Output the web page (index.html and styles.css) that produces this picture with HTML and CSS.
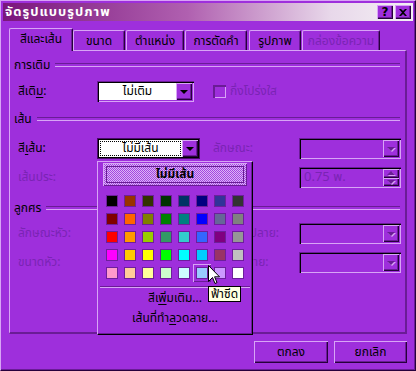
FILE: index.html
```html
<!DOCTYPE html>
<html lang="th">
<head>
<meta charset="utf-8">
<title>จัดรูปแบบรูปภาพ</title>
<link rel="stylesheet" href="styles.css">
</head>
<body>
<div class="window">
  <div class="titlebar">
    <span class="title">จัดรูปแบบรูปภาพ</span>
    <span class="tb-btns">
      <span class="tb-btn help">?</span>
      <span class="tb-btn close"><svg width="8" height="7" viewBox="0 0 8 7"><path d="M0 0h2l2 2 2-2h2L5 3.5 8 7H6L4 5 2 7H0l3-3.5z" fill="#000"/></svg></span>
    </span>
  </div>

  <div class="tabs">
    <div class="tab active t1">สีและเส้น</div>
    <div class="tab t2">ขนาด</div>
    <div class="tab t3">ตำแหน่ง</div>
    <div class="tab t4">การตัดคำ</div>
    <div class="tab t5">รูปภาพ</div>
    <div class="tab t6 disabled">กล่องข้อความ</div>
  </div>

  <div class="panel">
    <div class="group-head g1"><span>การเติม</span></div>
    <div class="row r1">
      <span class="lbl">สีเติ<u>ม</u>:</span>
      <div class="combo fill"><span class="field">ไม่เติม</span><span class="ddbtn"><i class="arrow"></i></span></div>
      <span class="checkwrap"><span class="check"></span><span class="dis">กึ่งโปร่งใส</span></span>
    </div>

    <div class="group-head g2"><span>เส้น</span></div>
    <div class="row r2">
      <span class="lbl">สี<u>เ</u>ส้น:</span>
      <div class="combo focus"><span class="field"><span class="focusbox">ไม่มีเส้น</span></span><span class="ddbtn"><i class="arrow"></i></span></div>
      <span class="rlbl dis">ลักษณะ:</span>
      <div class="combo disabled"><span class="field"></span><span class="ddbtn"><i class="arrow off"></i></span></div>
    </div>
    <div class="row r3">
      <span class="lbl dis">เส้นประ:</span>
      <div class="combo disabled"><span class="field"></span><span class="ddbtn"><i class="arrow off"></i></span></div>
      <span class="rlbl dis">น้ำหนัก:</span>
      <div class="combo disabled spin"><span class="field dis">0.75 พ.</span><span class="spinbtns"><span class="sbtn"><i class="arrow up off"></i></span><span class="sbtn"><i class="arrow off"></i></span></span></div>
    </div>

    <div class="group-head g3"><span>ลูกศร</span></div>
    <div class="row r4">
      <span class="lbl dis">ลักษณะหัว:</span>
      <div class="combo disabled"><span class="field"></span><span class="ddbtn"><i class="arrow off"></i></span></div>
      <span class="rlbl dis">ลักษณะปลาย:</span>
      <div class="combo disabled"><span class="field"></span><span class="ddbtn"><i class="arrow off"></i></span></div>
    </div>
    <div class="row r5">
      <span class="lbl dis">ขนาดหัว:</span>
      <div class="combo disabled"><span class="field"></span><span class="ddbtn"><i class="arrow off"></i></span></div>
      <span class="rlbl dis">ขนาดปลาย:</span>
      <div class="combo disabled"><span class="field"></span><span class="ddbtn"><i class="arrow off"></i></span></div>
    </div>
  </div>

  <div class="buttons">
    <span class="btn ok">ตกลง</span>
    <span class="btn cancel">ยกเลิก</span>
  </div>

  <div class="popup">
    <div class="nonebtn"><span>ไม่มีเส้น</span></div>
    <div class="grid">
      <span class="cell"><i style="background:#000000"></i></span>
      <span class="cell"><i style="background:#993300"></i></span>
      <span class="cell"><i style="background:#333300"></i></span>
      <span class="cell"><i style="background:#003300"></i></span>
      <span class="cell"><i style="background:#003366"></i></span>
      <span class="cell"><i style="background:#000080"></i></span>
      <span class="cell"><i style="background:#333399"></i></span>
      <span class="cell"><i style="background:#333333"></i></span>

      <span class="cell"><i style="background:#800000"></i></span>
      <span class="cell"><i style="background:#ff6600"></i></span>
      <span class="cell"><i style="background:#808000"></i></span>
      <span class="cell"><i style="background:#008000"></i></span>
      <span class="cell"><i style="background:#008080"></i></span>
      <span class="cell"><i style="background:#0000ff"></i></span>
      <span class="cell"><i style="background:#666699"></i></span>
      <span class="cell"><i style="background:#808080"></i></span>

      <span class="cell"><i style="background:#ff0000"></i></span>
      <span class="cell"><i style="background:#ff9900"></i></span>
      <span class="cell"><i style="background:#99cc00"></i></span>
      <span class="cell"><i style="background:#339966"></i></span>
      <span class="cell"><i style="background:#33cccc"></i></span>
      <span class="cell"><i style="background:#3366ff"></i></span>
      <span class="cell"><i style="background:#800080"></i></span>
      <span class="cell"><i style="background:#969696"></i></span>

      <span class="cell"><i style="background:#ff00ff"></i></span>
      <span class="cell"><i style="background:#ffcc00"></i></span>
      <span class="cell"><i style="background:#ffff00"></i></span>
      <span class="cell"><i style="background:#00ff00"></i></span>
      <span class="cell"><i style="background:#00ffff"></i></span>
      <span class="cell"><i style="background:#00ccff"></i></span>
      <span class="cell"><i style="background:#993366"></i></span>
      <span class="cell"><i style="background:#c0c0c0"></i></span>

      <span class="cell"><i style="background:#ff99cc"></i></span>
      <span class="cell"><i style="background:#ffcc99"></i></span>
      <span class="cell"><i style="background:#ffff99"></i></span>
      <span class="cell"><i style="background:#ccffcc"></i></span>
      <span class="cell"><i style="background:#ccffff"></i></span>
      <span class="cell hot"><i style="background:#99ccff"></i></span>
      <span class="cell"><i style="background:#cc99ff"></i></span>
      <span class="cell"><i style="background:#ffffff"></i></span>
    </div>
    <div class="sep"></div>
    <div class="item">สีเ<u>พ</u>ิ่มเติม...</div>
    <div class="item">เส้นที่ทำ<u>ล</u>วดลาย...</div>
  </div>

  <div class="tooltip">ฟ้าซีด</div>

  <svg class="cursor" width="12" height="20" viewBox="0 0 12 20">
    <path d="M0.5 0.5V16.5L4.5 12.5L7 18.5L9 17.6L6.6 11.8H11.5Z" fill="#fff" stroke="#000" stroke-width="1" stroke-linejoin="miter"/>
  </svg>
</div>
</body>
</html>
```

FILE: styles.css
```css
:root {
  --face: #9e2fdc;
  --hi: #d8a4f6;
  --lo: #6a1c96;
  --dk: #26003c;
  --dis: #7a24b4;
}

* { box-sizing: border-box; }

html, body {
  margin: 0;
  padding: 0;
}

body {
  width: 416px;
  height: 371px;
  overflow: hidden;
  background: var(--face);
  font-family: Tahoma, "Noto Sans Thai", "Noto Sans", "DejaVu Sans", sans-serif;
  font-size: 12px;
  color: #000;
}

u { text-decoration: underline; text-underline-offset: 2px; }

.window {
  position: relative;
  width: 416px;
  height: 371px;
  background: var(--face);
  border: 1px solid;
  border-color: var(--hi) var(--dk) var(--dk) var(--hi);
  box-shadow: inset -1px -1px var(--lo);
  padding: 2px;
  display: flex;
  flex-direction: column;
}

/* title bar */
.titlebar {
  height: 18px;
  display: flex;
  align-items: center;
  justify-content: space-between;
  background: linear-gradient(90deg, #7a167c 0%, #b060b0 45%, #e8d8ea 80%, #f4f0f4 100%);
  padding: 0 2px 0 2px;
}
.title {
  color: #fff;
  font-weight: bold;
  font-size: 13px;
  letter-spacing: 1px;
  line-height: 18px;
}
.tb-btns { display: flex; gap: 2px; }
.tb-btn {
  width: 16px;
  height: 14px;
  background: var(--face);
  box-shadow: inset 1px 1px var(--hi), inset -1px -1px var(--dk), inset -2px -2px var(--lo);
  display: flex;
  align-items: center;
  justify-content: center;
  font-weight: bold;
  font-size: 12px;
  line-height: 14px;
  font-family: "DejaVu Sans", sans-serif;
}
.tb-btn.help { padding-bottom: 1px; }

/* tabs */
.tabs {
  margin: 7px 0 0 6px;
  height: 22px;
  display: flex;
  align-items: flex-end;
}
.tab {
  height: 20px;
  border: 1px solid var(--hi);
  border-bottom: none;
  border-right: 1px solid var(--dk);
  box-shadow: inset -1px 0 var(--lo);
  border-radius: 2px 2px 0 0;
  display: flex;
  align-items: center;
  justify-content: center;
  line-height: 18px;
  padding-top: 1px;
}
.tab.active {
  height: 23px;
  margin-bottom: -1px;
  position: relative;
  z-index: 2;
  background: var(--face);
  padding-top: 0;
  padding-bottom: 2px;
}
.t1 { width: 64px; }
.t2 { width: 52px; }
.t3 { width: 58px; margin-left: 1px; }
.t4 { width: 62px; margin-left: 1px; }
.t5 { width: 52px; margin-left: 2px; }
.t6 { width: 78px; margin-left: 1px; }
.tab.disabled { color: var(--dis); }

/* panel */
.panel {
  margin-left: 6px;
  width: 398px;
  height: 284px;
  border-top: 1px solid var(--hi);
  border-left: 1px solid var(--hi);
  border-right: 2px solid var(--lo);
  border-bottom: 2px solid var(--lo);
  padding: 0 4px 0 4px;
  position: relative;
  z-index: 1;
}

.group-head {
  height: 15px;
  display: flex;
  align-items: center;
  margin-right: 1px;
  line-height: 15px;
}
.group-head::after {
  content: "";
  flex: 1;
  height: 2px;
  border-top: 1px solid var(--lo);
  border-bottom: 1px solid var(--hi);
  margin-left: 5px;
  margin-top: -2px;
}
.g1 { margin-top: 7px; }
.g2 { margin-top: 10px; }
.g3 { margin-top: 13px; }

.row {
  height: 21px;
  padding-left: 4px;
  display: grid;
  grid-template-columns: 79px 103px 13px 1fr 102px;
  align-items: center;
  line-height: 21px;
}
.row .lbl { grid-column: 1; }
.row .combo { grid-column: 2; }
.row .rlbl { grid-column: 4; }
.row .rlbl + .combo { grid-column: 5; }
.r1 { margin-top: 8px; }
.r2 { margin-top: 11px; }
.r3 { margin-top: 8px; }
.r4 { margin-top: 7px; }
.r5 { margin-top: 8px; }

.dis { color: var(--dis); }

/* combos */
.combo {
  height: 21px;
  display: flex;
  background: #fff;
  padding: 2px 2px 2px 2px;
  box-shadow: inset 1px 1px var(--lo), inset 2px 2px #000, inset -1px -1px var(--hi), inset -2px -2px var(--face);
}
.combo.fill { width: 97px; }
.combo.disabled { background: var(--face); }
.combo.focus {
  box-shadow: inset 0 0 0 1px #4a0a6a, inset 0 0 0 2px #000;
}
.field {
  flex: 1;
  text-align: center;
  line-height: 17px;
  white-space: nowrap;
  overflow: hidden;
}
.combo.focus .field {
  padding: 1px 1px;
  display: flex;
}
.focusbox {
  flex: 1;
  outline: 1px dotted #000;
  outline-offset: -1px;
  line-height: 15px;
  text-align: center;
}
.ddbtn {
  width: 16px;
  height: 17px;
  background: var(--face);
  box-shadow: inset 1px 1px var(--hi), inset -1px -1px var(--dk), inset -2px -2px var(--lo);
  display: flex;
  align-items: center;
  justify-content: center;
}
.arrow {
  display: block;
  width: 0;
  height: 0;
  border-left: 4px solid transparent;
  border-right: 4px solid transparent;
  border-top: 4px solid #000;
  margin-top: 1px;
}
.arrow.off {
  border-top-color: var(--lo);
  filter: drop-shadow(1px 1px 0 var(--hi));
}
.arrow.up {
  border-top: none;
  border-bottom: 4px solid var(--lo);
  margin-top: 0;
}

.combo.spin .field {
  text-align: left;
  padding-left: 3px;
  font-size: 13px;
  line-height: 17px;
  overflow: visible;
}
.spinbtns {
  width: 16px;
  display: flex;
  flex-direction: column;
}
.sbtn {
  flex: 1;
  background: var(--face);
  box-shadow: inset 1px 1px var(--hi), inset -1px -1px var(--dk), inset -2px -2px var(--lo);
  display: flex;
  align-items: center;
  justify-content: center;
}

/* checkbox */
.checkwrap {
  grid-column: 4 / 6;
  display: flex;
  align-items: center;
  gap: 4px;
}
.check {
  width: 13px;
  height: 13px;
  box-shadow: inset 1px 1px var(--lo), inset 2px 2px var(--lo), inset -1px -1px var(--hi);
}

/* dialog buttons */
.buttons {
  margin-top: 7px;
  display: flex;
  justify-content: flex-end;
  gap: 6px;
  padding-right: 6px;
}
.btn {
  height: 22px;
  display: flex;
  align-items: center;
  justify-content: center;
  background: var(--face);
  box-shadow: inset 1px 1px var(--hi), inset -1px -1px var(--dk), inset -2px -2px var(--lo);
}
.btn.ok { width: 74px; }
.btn.cancel { width: 73px; }

/* popup palette */
.popup {
  position: absolute;
  left: 96px;
  top: 160px;
  width: 156px;
  height: 174px;
  z-index: 5;
  background: var(--face);
  border: 1px solid;
  border-color: var(--hi) #000 #000 var(--hi);
  box-shadow: inset -1px -1px var(--lo);
  padding: 1px 5px;
}
.nonebtn {
  height: 23px;
  padding: 3px;
  background: repeating-conic-gradient(#dcb6f6 0 25%, #a246e0 0 50%) 0 0 / 2px 2px;
  box-shadow: inset 1px 1px var(--hi), inset -1px -1px var(--lo);
}
.nonebtn span {
  display: block;
  height: 17px;
  border: 1px solid var(--lo);
  text-align: center;
  line-height: 15px;
  font-weight: bold;
}
.grid {
  margin-top: 6px;
  display: grid;
  grid-template-columns: repeat(8, 18px);
  grid-auto-rows: 18px;
}
.cell {
  display: flex;
  align-items: center;
  justify-content: center;
}
.cell i {
  display: block;
  width: 12px;
  height: 12px;
  border: 1px solid #6d1f9c;
}
.cell.hot {
  box-shadow: inset 1px 1px var(--hi), inset -1px -1px var(--lo);
}
.sep {
  margin: 4px -3px 0;
  border-top: 1px solid var(--lo);
  border-bottom: 1px solid var(--hi);
}
.item {
  height: 20px;
  line-height: 20px;
  text-align: center;
}
.item:first-of-type { margin-top: 5px; }

.tooltip {
  position: absolute;
  left: 207px;
  top: 285px;
  width: 33px;
  height: 16px;
  z-index: 6;
  background: #ffffe1;
  border: 1px solid #000;
  font-size: 12px;
  line-height: 14px;
  text-align: center;
}

.cursor {
  position: absolute;
  left: 207px;
  top: 264px;
  z-index: 7;
}
```
